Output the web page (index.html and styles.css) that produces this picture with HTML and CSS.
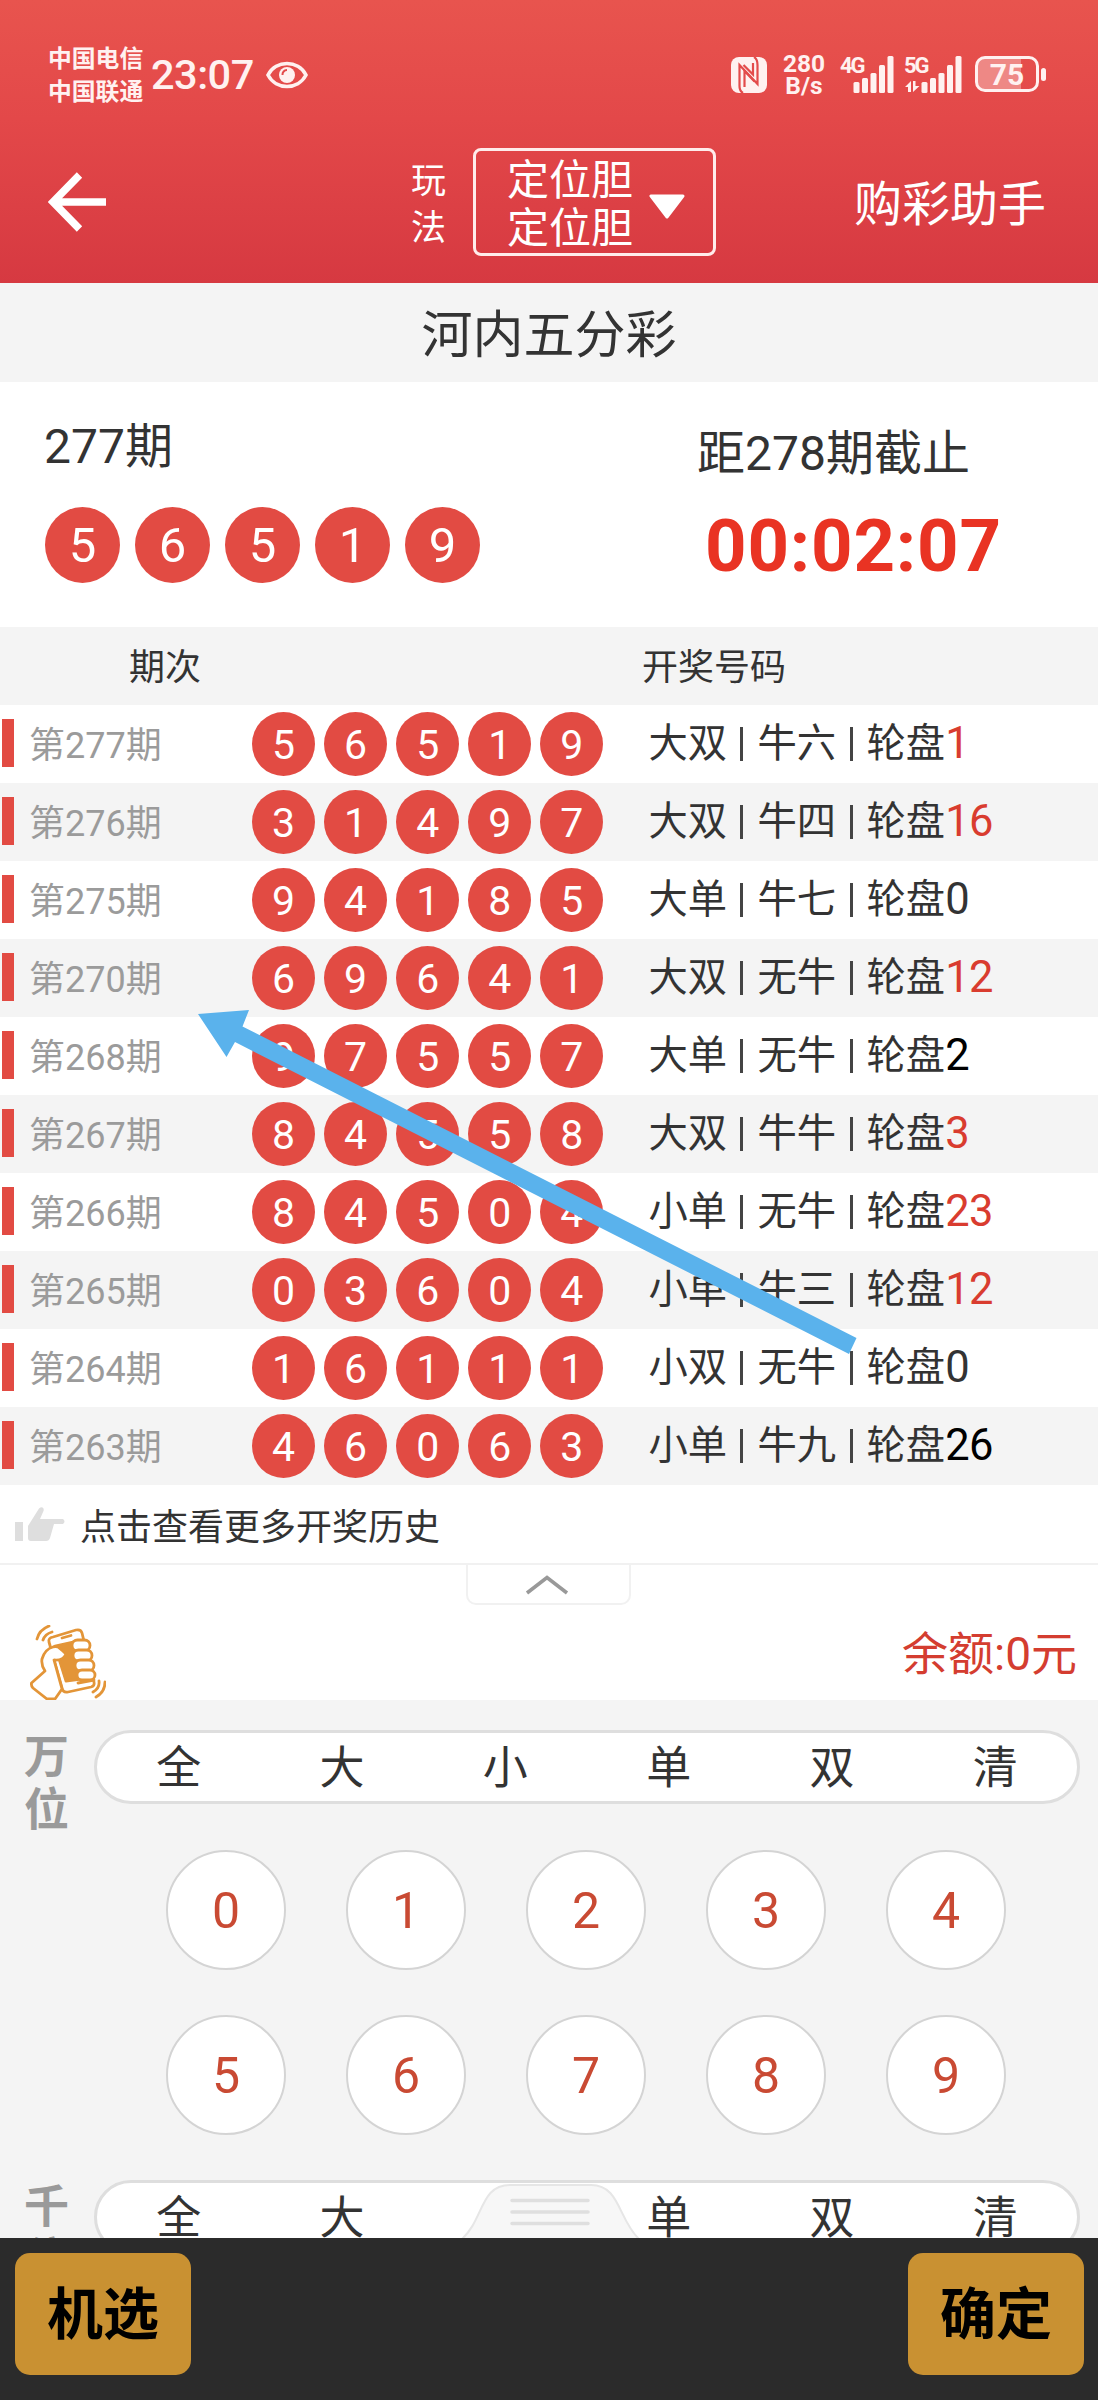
FILE: index.html
```html
<!DOCTYPE html>
<html lang="zh-CN">
<head>
<meta charset="utf-8">
<title>河内五分彩</title>
<link rel="stylesheet" href="styles.css">
</head>
<body>
<div class="app">
  <header class="header">
    <div class="status">
      <div class="carriers"><span>中国电信</span><span>中国联通</span></div>
      <div class="clock">23:07</div>
      <svg class="eye" width="42" height="28" viewBox="0 0 42 28"><path d="M2 14C10-1.300 32-1.300 40 14C32 29.300 10 29.300 2 14Z" fill="none" stroke="#fff1f0" stroke-width="3.600"/><circle cx="21" cy="14" r="8" fill="#fff1f0"/><path d="M16.500 14a4.500 4.500 0 0 1 4.500-5" fill="none" stroke="#e34b4b" stroke-width="2"/></svg>
      <svg class="nfc" width="36" height="36" viewBox="0 0 36 36"><rect width="36" height="36" rx="8" fill="#fff1f0"/><path d="M12 36Q8.500 34 8.500 29V8L26.500 27V8Q26.500 2 23 0" fill="none" stroke="#e34b4b" stroke-width="2.200"/><path d="M13.500 30V14L23.500 24.500" fill="none" stroke="#e34b4b" stroke-width="2.200"/><path d="M12.500 8L22 17.500V6" fill="none" stroke="#e34b4b" stroke-width="2.200"/></svg>
      <div class="speed"><span>280</span><span>B/s</span></div>
      <div class="signal"><span class="net">4G</span><svg width="54" height="38" viewBox="0 0 54 38"><g fill="#fff1f0"><rect x="13.500" y="27" width="6" height="11" rx="1.500"/><rect x="22" y="23" width="6" height="15" rx="1.500"/><rect x="30.500" y="18" width="6" height="20" rx="1.500"/><rect x="39" y="10" width="6" height="28" rx="1.500"/><rect x="47.500" y="1" width="6" height="37" rx="1.500"/></g></svg></div>
      <div class="signal five"><span class="net">5G</span><svg width="58" height="38" viewBox="0 0 58 38"><g fill="#fff1f0"><rect x="17.500" y="27" width="6" height="11" rx="1.500"/><rect x="26" y="23" width="6" height="15" rx="1.500"/><rect x="34.500" y="18" width="6" height="20" rx="1.500"/><rect x="43" y="10" width="6" height="28" rx="1.500"/><rect x="51.500" y="1" width="6" height="37" rx="1.500"/><path d="M1 32L7 26V37H4V32ZM9 26H11.500V31H15.500L9 37Z"/></g></svg></div>
      <div class="battery"><span>75</span></div><i class="battery-cap"></i>
    </div>
    <nav class="nav">
      <svg class="back" width="59" height="60" viewBox="0 0 59 60"><path d="M31.500 3L5 30L31.500 57M5 30H58" fill="none" stroke="#fff" stroke-width="7.500"/></svg>
      <div class="mode-label"><span>玩</span><span>法</span></div>
      <div class="mode-box"><div class="mode-text"><span>定位胆</span><span>定位胆</span></div><svg width="36" height="25" viewBox="0 0 36 25"><path d="M2 2H34L18 23Z" fill="#fff" stroke="#fff" stroke-width="3" stroke-linejoin="round"/></svg></div>
      <div class="helper">购彩助手</div>
    </nav>
  </header>

  <h1 class="title">河内五分彩</h1>

  <section class="current">
    <div class="last">
      <div class="period">277期</div>
      <div class="big-balls"><b>5</b><b>6</b><b>5</b><b>1</b><b>9</b></div>
    </div>
    <div class="deadline">
      <div class="period">距278期截止</div>
      <div class="countdown">00:02:07</div>
    </div>
  </section>

  <section class="history">
    <div class="thead"><span class="th-a">期次</span><span class="th-b">开奖号码</span></div>
    <div class="row"><span class="no">第277期</span><span class="balls"><b>5</b><b>6</b><b>5</b><b>1</b><b>9</b></span><span class="res">大双<i></i>牛六<i></i>轮盘<em class="red">1</em></span></div>
    <div class="row"><span class="no">第276期</span><span class="balls"><b>3</b><b>1</b><b>4</b><b>9</b><b>7</b></span><span class="res">大双<i></i>牛四<i></i>轮盘<em class="red">16</em></span></div>
    <div class="row"><span class="no">第275期</span><span class="balls"><b>9</b><b>4</b><b>1</b><b>8</b><b>5</b></span><span class="res">大单<i></i>牛七<i></i>轮盘<em>0</em></span></div>
    <div class="row"><span class="no">第270期</span><span class="balls"><b>6</b><b>9</b><b>6</b><b>4</b><b>1</b></span><span class="res">大双<i></i>无牛<i></i>轮盘<em class="red">12</em></span></div>
    <div class="row"><span class="no">第268期</span><span class="balls"><b>9</b><b>7</b><b>5</b><b>5</b><b>7</b></span><span class="res">大单<i></i>无牛<i></i>轮盘<em class="black">2</em></span></div>
    <div class="row"><span class="no">第267期</span><span class="balls"><b>8</b><b>4</b><b>5</b><b>5</b><b>8</b></span><span class="res">大双<i></i>牛牛<i></i>轮盘<em class="red">3</em></span></div>
    <div class="row"><span class="no">第266期</span><span class="balls"><b>8</b><b>4</b><b>5</b><b>0</b><b>4</b></span><span class="res">小单<i></i>无牛<i></i>轮盘<em class="red">23</em></span></div>
    <div class="row"><span class="no">第265期</span><span class="balls"><b>0</b><b>3</b><b>6</b><b>0</b><b>4</b></span><span class="res">小单<i></i>牛三<i></i>轮盘<em class="red">12</em></span></div>
    <div class="row"><span class="no">第264期</span><span class="balls"><b>1</b><b>6</b><b>1</b><b>1</b><b>1</b></span><span class="res">小双<i></i>无牛<i></i>轮盘<em>0</em></span></div>
    <div class="row"><span class="no">第263期</span><span class="balls"><b>4</b><b>6</b><b>0</b><b>6</b><b>3</b></span><span class="res">小单<i></i>牛九<i></i>轮盘<em class="black">26</em></span></div>
    <svg class="pointer" width="660" height="345" viewBox="0 0 660 345"><path d="M0 4L51 0L44.500 16.500L658.500 328L651 344L37 32L28.500 47Z" fill="#5ab2ec"/></svg>
  </section>

  <div class="more">
    <svg width="50" height="35" viewBox="0 0 50 35"><g fill="#dedede"><path d="M0 15H8V34H0Z"/><path d="M13 19L24 1.500C27-1 29.500 1 28.500 4L25 12H48Q51 14.500 48 17H39L35 31Q34 34 31 34H16Q13 34 13 31Z"/></g></svg>
    <span>点击查看更多开奖历史</span>
  </div>

  <div class="fold"><div class="fold-tab"><svg width="44" height="20" viewBox="0 0 44 20"><path d="M2 18L22 2.500L42 18" fill="none" stroke="#999" stroke-width="3.600"/></svg></div></div>

  <div class="balance">
    <svg width="76" height="75" viewBox="0 0 76 75"><g fill="#fff" stroke="#e39538" stroke-width="2.800" stroke-linejoin="round" stroke-linecap="round"><path d="M23 12L46 5Q51 4 52 8L64 57Q65 61 61 62L38 67Q33 68 32 63L19 17Q18 13 23 12Z"/><path d="M25 21L43 17L51 54L36 56Z" fill="#e39538"/><path d="M32 13L41 10.500" fill="none"/><path d="M23 22Q15 24 12 34Q11 40 15 46L1.500 58Q1 61 3 63L17 74H25L32 64L24 35Q33 36 36 29Q33 26 28 22Q25 21 23 22Z"/><rect x="42" y="15" width="18" height="11" rx="5.500"/><rect x="43" y="25" width="19" height="11" rx="5.500"/><rect x="45" y="35" width="19" height="11" rx="5.500"/><rect x="47" y="45" width="18" height="10" rx="5"/><path d="M48 58L64 55" fill="none"/><path d="M7 14Q9 5 19 1M13 15Q15 9 22 7M75 57Q75 67 66 72M69 56Q70 63 63 67" fill="none"/></g></svg>
    <span>余额:0元</span>
  </div>

  <main class="bets">
    <section class="position">
      <div class="pos-name"><span>万</span><span>位</span></div>
      <div class="pos-body">
        <div class="pill"><span>全</span><span>大</span><span>小</span><span>单</span><span>双</span><span>清</span></div>
        <div class="digits"><b>0</b><b>1</b><b>2</b><b>3</b><b>4</b><b>5</b><b>6</b><b>7</b><b>8</b><b>9</b></div>
      </div>
    </section>
    <section class="position">
      <div class="pos-name"><span>千</span><span>位</span></div>
      <div class="pos-body">
        <div class="pill"><span>全</span><span>大</span><span>小</span><span>单</span><span>双</span><span>清</span></div>
      </div>
    </section>
    <svg class="drawer" width="180" height="56" viewBox="0 0 180 56"><path d="M2 56C24 36 20 2 50 2H131C160 2 158 36 179 56" fill="#f7f7f7" stroke="#e6e6e6" stroke-width="2"/><path d="M52 17.500H128M52 29H128M52 40.500H128" stroke="#dfdfdf" stroke-width="3.500" stroke-linecap="round"/></svg>
  </main>

  <footer class="footer"><button>机选</button><button>确定</button></footer>
</div>
</body>
</html>
```
FILE: styles.css
```css
* { box-sizing: border-box; }
body {
  margin: 0;
  background: #fff;
  color: #333;
  font-family: Roboto, "Noto Sans CJK SC", sans-serif;
}
.app { width: 1098px; height: 2400px; display: flex; flex-direction: column; overflow: hidden; }
b, em, i { font-weight: 400; font-style: normal; }
svg { display: block; flex: none; }

/* header */
.header { height: 283px; flex: none; background: linear-gradient(#e8544e, #e34849 42%, #d63941); color: #fff; }
.status { height: 148px; padding: 42px 52px 0 48px; display: flex; align-items: flex-start; color: #fff1f0; }
.carriers { width: 103px; padding-top: 1px; display: flex; flex-direction: column; font-size: 23.800px; line-height: 33px; font-weight: 700; white-space: nowrap; }
.clock { width: 115px; margin-top: 8px; font-size: 41.500px; line-height: 50px; font-weight: 500; letter-spacing: -0.5px; white-space: nowrap; }
.eye { margin-top: 19px; }
.nfc { margin: 15px 0 0 423px; }
.speed { width: 50px; margin: 11px 0 0 12px; display: flex; flex-direction: column; align-items: center; font-size: 24.500px; line-height: 22px; font-weight: 700; }
.signal { width: 54px; margin: 12px 0 0 11px; display: grid; }
.signal > * { grid-area: 1 / 1; }
.signal svg { margin-top: 1px; }
.signal.five { width: 58px; margin-left: 10px; }
.net { font-size: 22px; line-height: 24px; font-weight: 700; letter-spacing: -2px; }
.battery { width: 64px; height: 36px; margin: 14px 0 0 13px; border: 3px solid #fff1f0; border-radius: 10px; background: linear-gradient(90deg, #ee8885 43px, transparent 43px); font-size: 30px; line-height: 31px; font-weight: 700; display: flex; justify-content: center; }
.battery-cap { width: 5px; height: 13px; margin: 26px 0 0 2px; border-radius: 3px; background: #fff1f0; }
.nav { height: 135px; display: flex; padding-left: 48px; }
.back { margin-top: 24px; }
.mode-label { margin: 10px 0 0 304px; width: 36px; display: flex; flex-direction: column; font-size: 35px; line-height: 47px; }
.mode-box { margin-left: 26px; width: 243px; height: 108px; border: 3px solid #ffeceb; border-radius: 8px; display: flex; align-items: center; padding-left: 31px; gap: 15px; }
.mode-text { padding-top: 6px; display: flex; flex-direction: column; font-size: 42px; line-height: 48px; width: 127px; }
.mode-box svg { margin-top: 8px; }
.helper { margin: 27px 0 0 138px; font-size: 48px; line-height: 60px; }

.title { margin: 0; height: 99px; flex: none; background: #f4f4f4; text-align: center; font-size: 51px; line-height: 105px; font-weight: 400; }

/* current draw */
.current { height: 245px; flex: none; display: flex; padding-left: 44px; }
.last { width: 653px; padding-top: 35px; }
.deadline { padding-top: 42px; }
.period { font-size: 48px; line-height: 60px; white-space: nowrap; }
.last .big-balls { display: flex; gap: 15px; margin: 30px 0 0 1px; }
.big-balls b { width: 75px; height: 76px; border-radius: 50%; background: #e24b43; color: #fff; text-align: center; font-size: 49px; line-height: 78px; }
.countdown { margin: 19px 0 0 8px; color: #e93323; font-size: 72.500px; line-height: 88px; font-weight: 700; letter-spacing: 0.8px; white-space: nowrap; }

/* history */
.history { position: relative; flex: none; }
.thead { height: 78px; background: #f4f4f4; display: flex; padding-left: 129px; font-size: 36px; line-height: 82px; }
.th-a { width: 513px; }
.row { height: 78px; display: flex; padding-left: 2px; }
.row:nth-child(odd) { background: #f4f4f4; }
.row::before { content: ""; width: 12px; height: 48px; margin-top: 14px; background: #e24b43; }
.no { width: 222px; padding-left: 15px; font-size: 36px; line-height: 82px; color: #9b9b9b; }
.balls { margin: 7px 0 0 16px; display: flex; gap: 9.100px; }
.balls b { width: 63px; height: 64px; border-radius: 50%; background: #e24b43; color: #fff; text-align: center; font-size: 41px; line-height: 66px; }
.res { margin-left: 45px; display: flex; align-items: center; font-size: 39.300px; line-height: 82px; }
.res i { width: 3px; height: 34px; margin: 0 14px 0 13.500px; background: #444; }
.res em { font-size: 43.500px; line-height: 80px; letter-spacing: -0.5px; }
.res .red { color: #d93c2f; }
.res .black { color: #000; }
.pointer { position: absolute; left: 198px; top: 383px; }

.more { height: 80px; flex: none; border-bottom: 2px solid #f1f1f1; display: flex; padding-left: 15px; font-size: 36px; line-height: 87px; }
.more svg { margin-top: 22px; }
.more span { margin-left: 15px; }
.fold { height: 39px; flex: none; }
.fold-tab { width: 165px; height: 40px; margin-left: 466px; border: 2px solid #f1f1f1; border-top: 0; border-radius: 0 0 10px 10px; padding: 10px 0 0 57px; }
.balance { height: 96px; flex: none; display: flex; justify-content: space-between; padding: 21px 21px 0 30px; font-size: 46px; line-height: 59px; color: #d43d30; }

/* betting area */
.bets { position: relative; height: 538px; flex: none; overflow: hidden; background: #f4f4f4; padding-top: 30px; }
.position { height: 450px; display: flex; padding-left: 24px; }
.pos-name { width: 70px; padding-top: 1px; display: flex; flex-direction: column; font-size: 45px; line-height: 53px; font-weight: 700; color: #9a9a9a; }
.pill { width: 986px; height: 74px; border: 3px solid #dedede; border-radius: 37px; background: #fff; display: grid; grid-template-columns: repeat(6, 1fr); text-align: center; font-size: 45px; line-height: 72px; }
.digits { display: grid; grid-template-columns: repeat(5, 120px); column-gap: 60px; row-gap: 45px; margin: 46px 0 0 72px; }
.digits b { height: 120px; border: 2px solid #d4d4d4; border-radius: 50%; background: #fff; text-align: center; font-size: 50px; line-height: 119px; color: #c94a33; }
.drawer { position: absolute; left: 460px; top: 483px; }

.footer { height: 162px; flex: none; background: #2b2b2b; display: flex; justify-content: space-between; padding: 15px 14px 0 15px; }
.footer button { width: 176px; height: 122px; padding: 0 0 8px; border: 0; border-radius: 15px; background: #c99132; color: #000; font: 700 56px/114px "Noto Sans CJK SC", sans-serif; }
```
